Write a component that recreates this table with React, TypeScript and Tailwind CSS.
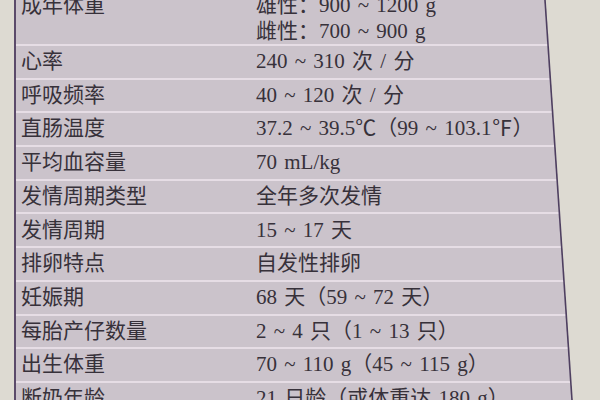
const rows: { label: string; value: string }[] = [
  { label: "心率", value: "240 ~ 310 次 / 分" },
  { label: "呼吸频率", value: "40 ~ 120 次 / 分" },
  { label: "直肠温度", value: "37.2 ~ 39.5℃（99 ~ 103.1℉）" },
  { label: "平均血容量", value: "70 mL/kg" },
  { label: "发情周期类型", value: "全年多次发情" },
  { label: "发情周期", value: "15 ~ 17 天" },
  { label: "排卵特点", value: "自发性排卵" },
  { label: "妊娠期", value: "68 天（59 ~ 72 天）" },
  { label: "每胎产仔数量", value: "2 ~ 4 只（1 ~ 13 只）" },
  { label: "出生体重", value: "70 ~ 110 g（45 ~ 115 g）" },
  { label: "断奶年龄", value: "21 日龄（或体重达 180 g）" },
];

const font = { fontFamily: '"Liberation Serif", "Noto Sans CJK SC", serif' };

export default function App() {
  return (
    <div className="relative w-[600px] h-[400px] overflow-hidden bg-[#dddad2]" style={font}>
      <div className="ml-[14px] w-[570px] -mt-[18px] border-l-2 border-[#5b4a6a] bg-[#cbc3cb] text-[21px] text-[#37313a] [word-spacing:2px]">
        {/* first row spans two value lines */}
        <div className="flex pt-[10px] border-b-2 border-[#e6dde5] leading-[26px]">
          <div className="w-[240px] pl-[5px]">成年体重</div>
          <div className="flex flex-col">
            <span>雄性：900 ~ 1200 g</span>
            <span>雌性：700 ~ 900 g</span>
          </div>
        </div>
        {rows.map((r) => (
          <div key={r.label} className="flex items-center h-[33.7px] border-b-2 border-[#e6dde5]">
            <div className="w-[240px] pl-[5px]">{r.label}</div>
            <div>{r.value}</div>
          </div>
        ))}
      </div>
      {/* slanted right edge of the photographed page */}
      <svg className="absolute inset-0" width="600" height="400" viewBox="0 0 600 400">
        <polygon points="545,0 600,0 600,400 572,400" fill="#dddad2" />
        <line x1="545" y1="0" x2="572" y2="400" stroke="#4e3f60" strokeWidth="1.6" />
      </svg>
    </div>
  );
}
